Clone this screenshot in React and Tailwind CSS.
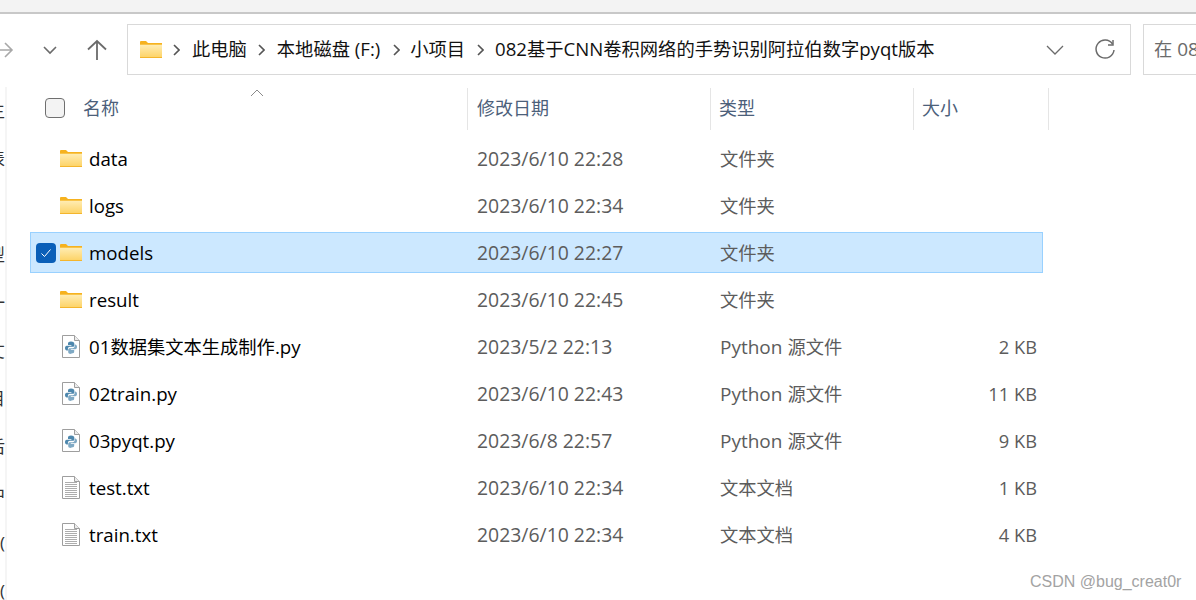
import React from "react";

const rows = [
  { name: "data", date: "2023/6/10 22:28", type: "文件夹", size: "", icon: "folder" },
  { name: "logs", date: "2023/6/10 22:34", type: "文件夹", size: "", icon: "folder" },
  { name: "models", date: "2023/6/10 22:27", type: "文件夹", size: "", icon: "folder", selected: true },
  { name: "result", date: "2023/6/10 22:45", type: "文件夹", size: "", icon: "folder" },
  { name: "01数据集文本生成制作.py", date: "2023/5/2 22:13", type: "Python 源文件", size: "2 KB", icon: "py" },
  { name: "02train.py", date: "2023/6/10 22:43", type: "Python 源文件", size: "11 KB", icon: "py" },
  { name: "03pyqt.py", date: "2023/6/8 22:57", type: "Python 源文件", size: "9 KB", icon: "py" },
  { name: "test.txt", date: "2023/6/10 22:34", type: "文本文档", size: "1 KB", icon: "txt" },
  { name: "train.txt", date: "2023/6/10 22:34", type: "文本文档", size: "4 KB", icon: "txt" },
];

// the window behind shows only as slivers of its text at the left edge
const behind = ["主", "表", "", "型", "一", "丈", "目", "后", "中", "(", "("];

// CJK runs sit a little smaller than the latin text around them
function Mixed({ text }) {
  return text.split(/([\u4e00-\u9fff]+)/).map((part, i) =>
    i % 2 ? (
      <span key={i} className="text-[18.3px]">
        {part}
      </span>
    ) : (
      part
    )
  );
}

function FolderIcon({ id }) {
  return (
    <svg width="22" height="18" viewBox="0 0 22 18" className="shrink-0">
      <defs>
        <linearGradient id={id} x1="0" y1="0" x2="0" y2="1">
          <stop offset="0" stopColor="#ffeeb8" />
          <stop offset="1" stopColor="#fdd263" />
        </linearGradient>
      </defs>
      <path d="M0 1a1 1 0 0 1 1-1h5l2 2h14v2H0z" fill="#f6b21f" />
      <rect x="0" y="3" width="22" height="14" fill={`url(#${id})`} />
      <rect x="0" y="3" width="22" height="1" fill="#f8c44a" />
      <rect x="0" y="16" width="22" height="1" fill="#f4b52c" />
    </svg>
  );
}

function PageIcon({ children }) {
  return (
    <svg width="18" height="23" viewBox="0 0 18 23" className="shrink-0">
      <path d="M.5.500h12l5 5v17H.5z" fill="#fff" stroke="#9e9e9e" />
      <path d="M12.500.5v5h5" fill="#ececec" stroke="#9e9e9e" />
      {children}
    </svg>
  );
}

function PyIcon() {
  return (
    <PageIcon>
      <path d="M9 6.500c-2.500 0-3 1-3 2V10h3.400v.8H4.800C3.500 10.800 3 12 3 13.200s.7 2.300 1.800 2.300h1.100v-1.700c0-1.100.9-2 2-2h2.800c.9 0 1.600-.7 1.600-1.600V8.500c0-1-.9-2-3.300-2z" fill="#4d87ad" />
      <path d="M9.200 18.500c2.500 0 3-1 3-2V15H8.800v-.8h4.400c1.300 0 1.800-1.200 1.800-2.400s-.7-2.300-1.800-2.300h-.6v1.700c0 1.100-.9 2-2 2H7.800c-.9 0-1.600.7-1.600 1.600v2.300c0 1 .7 2 3 2z" fill="#7fa9c4" />
    </PageIcon>
  );
}

function TxtIcon() {
  return (
    <PageIcon>
      {[6, 8, 10, 12, 14, 16, 18, 20].map((y) => (
        <rect key={y} x="3" y={y} width="12" height="1" fill="#adadad" />
      ))}
    </PageIcon>
  );
}

function Crumb({ className }) {
  return (
    <svg width="7" height="12" viewBox="0 0 7 12" fill="none" stroke="#555" strokeWidth="1.600" className={className}>
      <path d="M1 1l5 5-5 5" />
    </svg>
  );
}

function Row({ row }) {
  return (
    <div
      className={`h-[41px] mb-[6px] ml-[23px] w-[1013px] flex items-center border ${
        row.selected ? "bg-[#cce8ff] border-[#99d1ff]" : "border-transparent"
      }`}
    >
      <div className="w-[29px] shrink-0 pl-[5px]">
        {row.selected && (
          <div className="w-5 h-5 rounded-[4px] bg-[#0a5fb8] flex items-center justify-center">
            <svg width="12" height="12" viewBox="0 0 12 12" fill="none" stroke="#fff" strokeWidth="1">
              <path d="M1.500 6.500l3 3 6-7" />
            </svg>
          </div>
        )}
      </div>
      <div className="w-[22px] mr-[6px] shrink-0 flex justify-center">
        {row.icon === "folder" && <FolderIcon id={`folder-${row.name}`} />}
        {row.icon === "py" && <PyIcon />}
        {row.icon === "txt" && <TxtIcon />}
      </div>
      <div className="w-[389px] shrink-0 pl-[1px] pt-[2px] text-[18.7px] text-black whitespace-nowrap">
        <Mixed text={row.name} />
      </div>
      <div className="w-[243px] shrink-0 text-[19.4px] text-[#5c5c5c]">{row.date}</div>
      <div className="w-[203px] shrink-0 pt-[2px] text-[#5c5c5c]">
        <Mixed text={row.type} />
      </div>
      <div className="w-[114px] shrink-0 pt-[2px] text-right text-[18.3px] text-[#5c5c5c] whitespace-nowrap">{row.size}</div>
    </div>
  );
}

export default function App() {
  return (
    <div
      className="relative w-[1196px] h-[600px] overflow-hidden bg-white text-[19px] leading-none"
      style={{ fontFamily: '"Open Sans", "Noto Sans CJK SC", sans-serif' }}
    >
      <div className="h-3 bg-[#f3f3f3]" />
      <div className="h-[2px] bg-[#c8c8c8]" />

      {/* toolbar */}
      <div className="h-[71px] flex items-start pt-[10px]">
        <div className="w-[127px] h-[51px] shrink-0 flex items-center overflow-hidden">
          <svg width="16" height="20" viewBox="0 0 16 20" fill="none" stroke="#a8a8a8" strokeWidth="1.600" className="ml-[-2px] mt-[1px]">
            <path d="M0 10h14M7 3l7 7-7 7" />
          </svg>
          <svg width="14" height="10" viewBox="0 0 14 10" fill="none" stroke="#6b6b6b" strokeWidth="1.600" className="ml-[29px] mt-[1px]">
            <path d="M1 2l6 6 6-6" />
          </svg>
          <svg width="20" height="22" viewBox="0 0 20 22" fill="none" stroke="#6b6b6b" strokeWidth="1.800" className="ml-[30px] mt-[1px]">
            <path d="M10 21V2M1 10.500L10 2l9 8.500" />
          </svg>
        </div>
        <div className="w-[1004px] h-[51px] shrink-0 border border-[#d9d9d9] flex items-center text-[18.6px] text-[#111]">
          <div className="ml-[12px]">
            <FolderIcon id="folder-address" />
          </div>
          <Crumb className="ml-[11px]" />
          <span className="ml-[12px]">
            <Mixed text="此电脑" />
          </span>
          <Crumb className="ml-[11px]" />
          <span className="ml-[12px]">
            <Mixed text="本地磁盘 (F:)" />
          </span>
          <Crumb className="ml-[13px]" />
          <span className="ml-[10px]">
            <Mixed text="小项目" />
          </span>
          <Crumb className="ml-[12px]" />
          <span className="ml-[11px] whitespace-nowrap">
            <Mixed text="082基于CNN卷积网络的手势识别阿拉伯数字pyqt版本" />
          </span>
          <svg width="18" height="10" viewBox="0 0 18 10" fill="none" stroke="#6b6b6b" strokeWidth="1.300" className="ml-auto">
            <path d="M1 1l8 8 8-8" />
          </svg>
          <svg width="22" height="22" viewBox="0 0 22 22" fill="none" stroke="#6b6b6b" strokeWidth="1.500" className="ml-[30px] mr-[14px]">
            <path d="M18.500 5A9 9 0 1 0 20 11" />
            <path d="M19 1v5h-5" />
          </svg>
        </div>
        <div className="ml-[12px] h-[51px] flex-1 border border-[#d9d9d9] border-r-0 flex items-center pl-[10px] text-[#6b6b6b] whitespace-nowrap overflow-hidden">
          <span>
            <Mixed text="在 08" />
          </span>
        </div>
      </div>

      {/* file list */}
      <div className="flex h-[515px]">
        <div className="w-[5px] shrink-0 overflow-hidden pt-[1px] text-[#333] text-[17px]">
          {behind.map((ch, i) => (
            <div key={i} className="h-[48px] flex items-center justify-end">
              <span className="shrink-0">{ch}</span>
            </div>
          ))}
        </div>
        <div className="w-[2px] shrink-0 mt-[2px] bg-[#f5f5f5]" />
        <div className="flex-1">
          <div className="relative h-[42px] mt-[3px] mb-[8px] flex items-stretch text-[18px] text-[#4c607a]">
            <svg width="14" height="8" viewBox="0 0 14 8" fill="none" stroke="#8a8a8a" className="absolute left-[243px] top-[1px]">
              <path d="M1 7l6-6 6 6" />
            </svg>
            <div className="w-[461px] shrink-0 border-r border-[#e5e5e5] flex items-center pl-[38px] pb-[2px]">
              <div className="w-5 h-5 rounded-[4px] border border-[#6f6f6f] bg-[#f3f3f3] mr-[18px]" />
              <span>名称</span>
            </div>
            <div className="w-[243px] shrink-0 border-r border-[#e5e5e5] flex items-center pl-[9px] pb-[2px]">修改日期</div>
            <div className="w-[203px] shrink-0 border-r border-[#e5e5e5] flex items-center pl-[8px] pb-[2px]">类型</div>
            <div className="w-[135px] shrink-0 border-r border-[#e5e5e5] flex items-center pl-[8px] pb-[2px]">大小</div>
          </div>
          {rows.map((row) => (
            <Row key={row.name} row={row} />
          ))}
        </div>
      </div>

      <div
        className="absolute left-[1030px] top-[574px] text-[16px] text-[#a3a3a3]"
        style={{ fontFamily: '"Liberation Sans", sans-serif' }}
      >
        CSDN @bug_creat0r
      </div>
    </div>
  );
}
